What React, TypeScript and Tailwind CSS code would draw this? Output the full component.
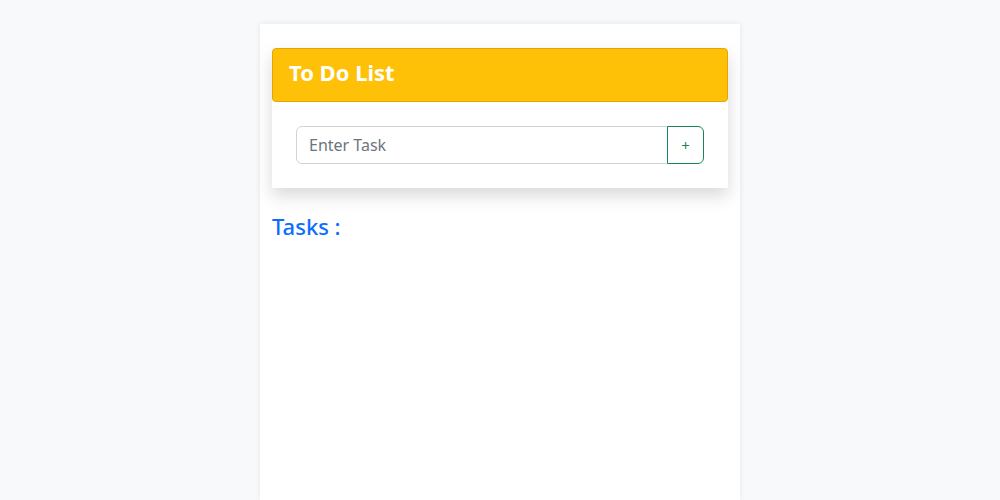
const App = () => {
  return (
    <div className="min-h-screen bg-[#f8f9fa] flex justify-center font-['Noto_Sans',sans-serif]">
      <div className="w-[480px] min-h-[476px] mt-6 bg-white px-3 pt-6 shadow-[0_0_6px_rgba(0,0,0,0.08)]">
        {/* 카드 */}
        <div className="shadow-[0_8px_16px_rgba(0,0,0,0.15)]">
          <div className="h-[54px] bg-[#ffc107] border border-[#e0a800] rounded-[4px] px-4 pb-[7px] flex items-center">
            <h3 className="text-[22px] font-bold text-white leading-none">To Do List</h3>
          </div>
          <div className="p-6 bg-white flex">
            <input
              placeholder="Enter Task"
              className="flex-1 h-[38px] border border-[#ced4da] rounded-l-[6px] px-3 text-[16px] text-[#212529] placeholder:text-[#6c757d] outline-none"
            />
            <button className="w-[37px] h-[38px] border border-[#198754] rounded-r-[6px] text-[#198754] text-[15px] -ml-px">
              +
            </button>
          </div>
        </div>
        <h4 className="mt-[27px] text-[22px] font-medium text-[#0d6efd] leading-none">Tasks :</h4>
      </div>
    </div>
  );
};

export default App;
